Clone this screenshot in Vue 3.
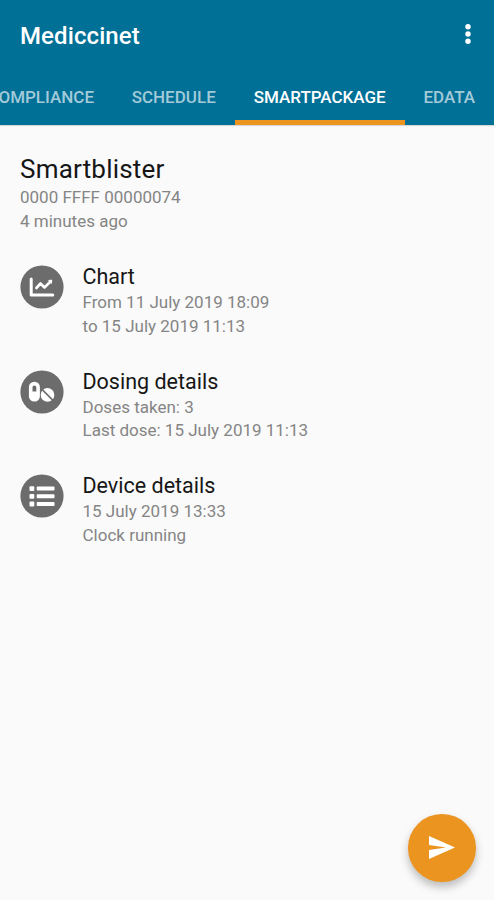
<script setup>
const tabs = [
  { id: 'compliance', label: 'COMPLIANCE' },
  { id: 'schedule', label: 'SCHEDULE' },
  { id: 'smartpackage', label: 'SMARTPACKAGE', active: true },
  { id: 'edata', label: 'EDATA' },
]
const items = [
  { icon: 'chart', title: 'Chart', lines: ['From 11 July 2019 18:09', 'to 15 July 2019 11:13'] },
  { icon: 'pills', title: 'Dosing details', lines: ['Doses taken: 3', 'Last dose: 15 July 2019 11:13'] },
  { icon: 'list', title: 'Device details', lines: ['15 July 2019 13:33', 'Clock running'] },
]
</script>

<template>
  <div class="screen">
    <header class="appbar">
      <div class="toolbar">
        <h1>Mediccinet</h1>
        <button class="more" aria-label="More options">
          <svg width="8" height="22" viewBox="0 0 8 22" fill="#fff">
            <circle cx="4" cy="3.8" r="2.7" /><circle cx="4" cy="11" r="2.7" /><circle cx="4" cy="18.2" r="2.7" />
          </svg>
        </button>
      </div>
      <nav class="tabs">
        <div v-for="t in tabs" :key="t.id" class="tab" :class="[t.id, { active: t.active }]"><span>{{ t.label }}</span></div>
      </nav>
    </header>
    <main>
      <section class="device">
        <h2>Smartblister</h2>
        <p>0000 FFFF 00000074</p>
        <p>4 minutes ago</p>
      </section>
      <section v-for="item in items" :key="item.title" class="item">
        <svg class="icon" viewBox="0 0 44 44">
          <circle cx="22" cy="22" r="21.6" fill="#6c6c6c" />
          <g v-if="item.icon === 'chart'" fill="none" stroke="#fff" stroke-width="2.6" stroke-linejoin="round" stroke-linecap="round">
            <path d="M11.2 14V30H32.8" stroke-width="3" />
            <path d="M16.4 23L20.5 18.5L24.5 22.5L31 16" />
            <path d="M28.6 15.4H31.5V18.3Z" fill="#fff" stroke-width=".6" />
          </g>
          <g v-else-if="item.icon === 'pills'">
            <rect x="8.9" y="11.8" width="11" height="19.6" rx="5.2" fill="#fff" />
            <path d="M12.5 21.5V17.4a1.9 1.9 0 0 1 3.8 0V21.5Z" fill="#6c6c6c" />
            <circle cx="27.5" cy="24.9" r="6.8" fill="#fff" />
            <path d="M21.5 18.9L33.5 30.9" stroke="#6c6c6c" stroke-width="1.6" />
          </g>
          <g v-else fill="#fff">
            <template v-for="y in [12.2, 19.9, 27.6]" :key="y">
              <rect x="9.5" :y="y" width="4.8" height="4.8" rx="1" />
              <rect x="16.7" :y="y + 0.4" width="17.8" height="4" rx=".8" />
            </template>
          </g>
        </svg>
        <div>
          <h3>{{ item.title }}</h3>
          <p v-for="line in item.lines" :key="line">{{ line }}</p>
        </div>
      </section>
    </main>
    <button class="fab" aria-label="Send">
      <svg width="26" height="23" viewBox="0 0 26 23"><path d="M0 0L26 11.5L0 23V14L17 11.5L0 9Z" fill="#fff" /></svg>
    </button>
  </div>
</template>

<style>
body { background: #fafafa; }
</style>
<style scoped>
.screen {
  position: relative;
  height: 900px;
  overflow: hidden;
  background: #fafafa;
  font-family: Roboto, "Liberation Sans", sans-serif;
}
h1, h2, h3, p { margin: 0; font-weight: 400; }
button { padding: 0; border: 0; background: none; }
.appbar { height: 125px; background: #007096; box-shadow: 0 1px 1px #0002; }
.toolbar {
  display: flex;
  align-items: center;
  justify-content: space-between;
  height: 70px;
  padding: 0 22px 0 20px;
}
h1 { padding-top: 2px; color: #fff; font-size: 24px; font-weight: 500; line-height: 28px; letter-spacing: .1px; }
.more { display: flex; margin-top: -2px; }
.tabs { display: flex; height: 55px; }
.tab {
  display: flex;
  flex: none;
  box-sizing: border-box;
  align-items: center;
  justify-content: center;
  border-bottom: 5px solid transparent;
  padding-top: 3px;
  color: #a3cad9;
  font-size: 17px;
  font-weight: 500;
  white-space: nowrap;
}
.tab.active { color: #fff; border-bottom-color: #ec9420; }
.compliance { width: 144px; margin-left: -31.3px; }
.schedule { width: 122px; }
.smartpackage { width: 170px; }
.edata { width: 89px; }
main { padding: 28px 20px; }
.device { height: 106px; }
h2 { color: #161616; font-size: 26px; line-height: 32px; letter-spacing: .2px; }
p { color: #858585; font-size: 17px; line-height: 23.5px; }
h2 + p { margin-top: 1px; }
.item { display: flex; gap: 19px; height: 104.5px; }
.icon { flex: none; width: 44px; height: 44px; margin-top: 6.3px; margin-left: -.5px; }
h3 { padding-top: 3px; color: #161616; font-size: 21.5px; line-height: 29px; }
.fab {
  position: absolute;
  right: 18.5px;
  bottom: 18.5px;
  display: flex;
  align-items: center;
  justify-content: center;
  width: 67.5px;
  height: 67.5px;
  border-radius: 50%;
  background: #ec9420;
  box-shadow: 0 5px 9px #00000040;
}
</style>
